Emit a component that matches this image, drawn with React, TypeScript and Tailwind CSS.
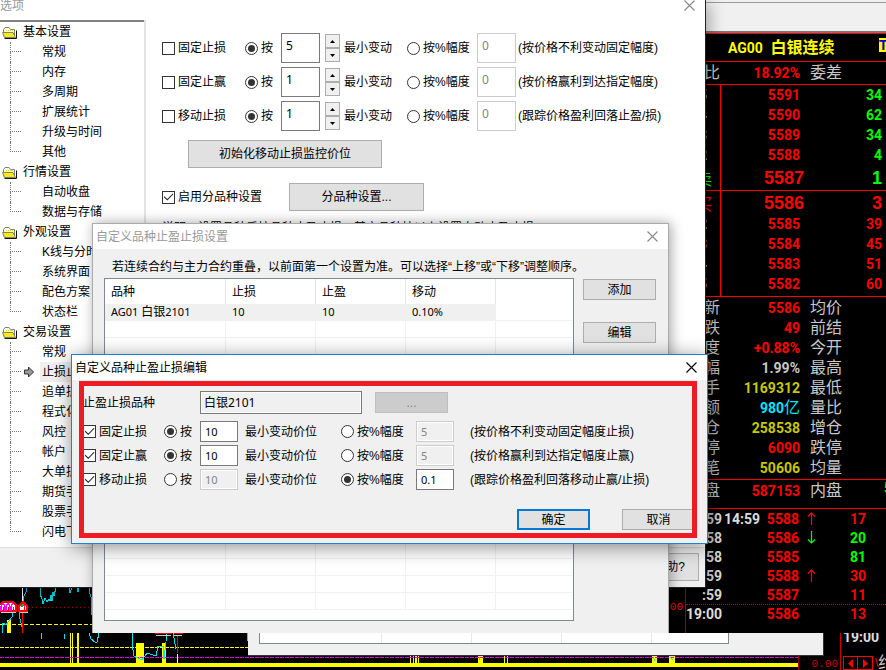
import React from "react";

const CHECKBOX =
  "grid size-[13px] shrink-0 appearance-none place-content-center border border-[#333] bg-white before:hidden before:h-[8px] before:w-[10px] before:bg-[#222] before:content-[''] before:[clip-path:polygon(0_50%,8%_40%,38%_75%,92%_5%,100%_13%,38%_95%)] checked:before:block";
const RADIO =
  "grid size-[13px] shrink-0 appearance-none place-content-center rounded-full border border-[#333] bg-white before:hidden before:size-[7px] before:rounded-full before:bg-[#333] before:content-[''] checked:before:block";
const NUM = "font-['Noto_Sans','Noto_Sans_CJK_SC',sans-serif] text-[11px]";
const BUTTON = "shrink-0 border border-[#adadad] bg-[#e1e1e1] text-center leading-none";

function Check({ label, checked = false }: { label: string; checked?: boolean }) {
  return (
    <label className="flex items-center gap-[3px] whitespace-nowrap">
      <input type="checkbox" defaultChecked={checked} className={CHECKBOX} />
      {label}
    </label>
  );
}

function Radio({ label, name, checked = false }: { label: string; name: string; checked?: boolean }) {
  return (
    <label className="flex items-center gap-[3px] whitespace-nowrap">
      <input type="radio" name={name} defaultChecked={checked} className={RADIO} />
      {label}
    </label>
  );
}

function CloseButton({ className }: { className: string }) {
  return (
    <button type="button" aria-label="关闭" className={className}>
      <svg width="11" height="11" viewBox="0 0 11 11" fill="none" stroke="currentColor" strokeWidth="1.1">
        <path d="M0.5 0.5 10.5 10.5M10.5 0.5 0.5 10.5" />
      </svg>
    </button>
  );
}

/* ---------- settings tree ---------- */

const TREE = [
  { title: "基本设置", items: ["常规", "内存", "多周期", "扩展统计", "升级与时间", "其他"] },
  { title: "行情设置", items: ["自动收盘", "数据与存储"] },
  { title: "外观设置", items: ["K线与分时", "系统界面", "配色方案", "状态栏"] },
  {
    title: "交易设置",
    items: ["常规", "止损止", "追单拆", "程式化", "风控", "帐户", "大单拆", "期货手", "股票手", "闪电下"],
  },
];

function FolderIcon() {
  return (
    <svg width="15" height="13" viewBox="0 0 15 13">
      <path d="M1.5 10V3.5L3 1.5H7L8.5 3.5H12.5V10Z" fill="#fbfbe0" stroke="#808080" />
      <path d="M0.5 6.5H11L13.5 11.5H2.5Z" fill="#fff200" stroke="#808080" />
      <path d="M4 4.5H12M2 8.5H12M3 10.5H13" stroke="#e8dc00" strokeDasharray="1 1" />
      <path d="M2.5 12.5H14.5V4.5" fill="none" stroke="#111" />
    </svg>
  );
}

function Tree() {
  return (
    <nav className="w-[144px] shrink-0 border-t-2 border-[#808080] bg-white">
      {TREE.map((group) => (
        <section key={group.title}>
          <h3 className="flex h-[20px] items-center gap-[6px] pl-[2px]">
            <FolderIcon />
            {group.title}
          </h3>
          <ul>
            {group.items.map((item, i) => (
              <li key={item} className="flex h-[20px] items-center pl-[10px]">
                <span className="flex h-full w-[11px] flex-col">
                  <span className="h-[10px] border-b border-l border-dotted border-[#777]" />
                  {i < group.items.length - 1 && <span className="h-[10px] border-l border-dotted border-[#777]" />}
                </span>
                <span className="flex w-[19px] justify-center pr-[3px]">
                  {item === "止损止" && (
                    <svg width="10" height="12" viewBox="0 0 10 12">
                      <path d="M0.5 4H4.5V1L9.5 6L4.5 11V8H0.5Z" fill="#999" stroke="#333" />
                    </svg>
                  )}
                </span>
                <a
                  href="#settings"
                  className={
                    item === "止损止"
                      ? "flex h-full items-center bg-[#f0f0f0] pl-[2px] pr-4 whitespace-nowrap"
                      : "pl-[2px] whitespace-nowrap"
                  }
                >
                  {item}
                </a>
              </li>
            ))}
          </ul>
        </section>
      ))}
    </nav>
  );
}

/* ---------- options window ---------- */

const OPTION_ROWS = [
  { label: "固定止损", value: "5", note: "(按价格不利变动固定幅度)" },
  { label: "固定止赢", value: "1", note: "(按价格赢利到达指定幅度)" },
  { label: "移动止损", value: "1", note: "(跟踪价格盈利回落止盈/损)" },
];

function Spinner() {
  return (
    <span className="ml-[5px] flex h-[28px] w-[15px] flex-col">
      <button type="button" aria-label="增加" className="grid h-[14px] place-content-center border border-[#adadad] bg-[#f0f0f0]">
        <svg width="5" height="3" viewBox="0 0 5 3">
          <path d="M2.5 0 5 3H0Z" />
        </svg>
      </button>
      <button type="button" aria-label="减少" className="grid h-[14px] place-content-center border border-[#adadad] bg-[#f0f0f0]">
        <svg width="5" height="3" viewBox="0 0 5 3">
          <path d="M0 0H5L2.5 3Z" />
        </svg>
      </button>
    </span>
  );
}

function OptionsWindow() {
  return (
    <section className="absolute top-0 left-0 flex h-[588px] w-[706px] flex-col border-r border-b border-[#222] bg-white shadow-[4px_4px_14px_rgba(0,0,0,0.3)]">
      <header className="flex h-[20px] shrink-0 items-start justify-between pr-[10px] text-[#999]">
        <h2 className="-mt-[3px] leading-[18px]">选项</h2>
        <CloseButton className="text-[#888]" />
      </header>
      <div className="flex h-[527px] shrink-0">
        <Tree />
        <div className="flex grow flex-col border-l-2 border-[#e4e4e4] pt-[13px] pl-[16px]">
          <div className="flex flex-col gap-[4px]">
            {OPTION_ROWS.map((row) => (
              <div
                key={row.label}
                className="grid h-[30px] grid-cols-[83px_36px_63px_63px_70px_41px_auto] items-center whitespace-nowrap"
              >
                <Check label={row.label} />
                <Radio label="按" name={"opt-" + row.label} checked />
                <span className="flex items-center">
                  <input
                    aria-label={row.label + "最小变动"}
                    defaultValue={row.value}
                    className="h-[30px] w-[39px] border border-[#7a7a7a] bg-white pb-[6px] pl-[4px] font-['Noto_Sans',sans-serif] text-[12px]"
                  />
                  <Spinner />
                </span>
                <span>最小变动</span>
                <Radio label="按%幅度" name={"opt-" + row.label} />
                <input
                  aria-label={row.label + "幅度"}
                  defaultValue="0"
                  disabled
                  className="h-[30px] w-[39px] border border-[#ccc] bg-white pb-[6px] pl-[4px] font-['Noto_Sans',sans-serif] text-[12px] text-[#838383]"
                />
                <span>{row.note}</span>
              </div>
            ))}
          </div>
          <button type="button" className={BUTTON + " mt-[9px] ml-[26px] h-[28px] w-[194px]"}>
            初始化移动止损监控价位
          </button>
          <div className="mt-[15px] flex h-[28px] shrink-0 items-center">
            <div className="w-[127px]">
              <Check label="启用分品种设置" checked />
            </div>
            <button type="button" className={BUTTON + " h-[28px] w-[135px]"}>
              分品种设置...
            </button>
          </div>
          <p className="mt-[10px] leading-[14px]">说明：设置品种后按品种止盈止损，其它品种按以上设置自动止盈止损</p>
        </div>
      </div>
      <footer className="flex grow items-center justify-end border-t border-[#dcdcdc] bg-[#f0f0f0] pr-[6px] pb-[2px]">
        <button type="button" className={BUTTON + " h-[28px] w-[59px]"}>
          帮助?
        </button>
      </footer>
    </section>
  );
}

/* ---------- list dialog ---------- */

const EMPTY_ROWS = Array.from({ length: 17 }, (_, i) => i);

function ListDialog() {
  return (
    <section className="absolute top-[223px] left-[92px] flex h-[410px] w-[577px] flex-col border border-b-0 border-[#aaa] bg-[#f0f0f0] shadow-[2px_0_12px_rgba(0,0,0,0.35)]">
      <header className="flex h-[25px] shrink-0 items-center justify-between bg-white pr-[10px] pl-[3px] text-[#999]">
        <h2>自定义品种止盈止损设置</h2>
        <CloseButton className="text-[#888]" />
      </header>
      <p className="flex h-[29px] shrink-0 items-center pt-[7px] pl-[19px] whitespace-nowrap">
        若连续合约与主力合约重叠，以前面第一个设置为准。可以选择“上移”或“下移”调整顺序。
      </p>
      <div className="flex gap-[9px] pl-[11px]">
        <div className="h-[343px] w-[470px] shrink-0 overflow-hidden border border-[#828790] bg-white pr-px">
          <table className="w-full table-fixed border-separate border-spacing-0 text-left">
            <colgroup>
              <col className="w-[121px]" />
              <col className="w-[90px]" />
              <col className="w-[90px]" />
              <col className="w-[90px]" />
              <col />
            </colgroup>
            <thead>
              <tr className="h-[25px]">
                {["品种", "止损", "止盈", "移动"].map((h) => (
                  <th key={h} className="border-r border-[#e5e5e5] p-0 pl-[6px] font-normal">
                    {h}
                  </th>
                ))}
                <th className="p-0" />
              </tr>
            </thead>
            <tbody>
              <tr className={"h-[17px] leading-[16px] " + NUM}>
                <td className="border-b border-[#f0f0f0] bg-[#f0f0f0] p-0 pl-[6px]">
                  AG01 <span className="text-[12px]">白银</span>2101
                </td>
                <td className="border-b border-[#f0f0f0] bg-[#f0f0f0] p-0 pl-[6px]">10</td>
                <td className="border-b border-[#f0f0f0] bg-[#f0f0f0] p-0 pl-[6px]">10</td>
                <td className="border-b border-[#f0f0f0] bg-[#f0f0f0] p-0 pl-[6px]">0.10%</td>
                <td className="border-b border-[#f0f0f0] p-0" />
              </tr>
              {EMPTY_ROWS.map((r) => (
                <tr key={r} className="h-[17px]">
                  <td className="border-r border-b border-[#f0f0f0] p-0" />
                  <td className="border-r border-b border-[#f0f0f0] p-0" />
                  <td className="border-r border-b border-[#f0f0f0] p-0" />
                  <td className="border-r border-b border-[#f0f0f0] p-0" />
                  <td className="border-b border-[#f0f0f0] p-0" />
                </tr>
              ))}
            </tbody>
          </table>
        </div>
        <div className="flex flex-col gap-[22px] pt-px">
          <button type="button" className={BUTTON + " h-[21px] w-[73px]"}>
            添加
          </button>
          <button type="button" className={BUTTON + " h-[21px] w-[73px]"}>
            编辑
          </button>
        </div>
      </div>
    </section>
  );
}

/* ---------- edit dialog ---------- */

const EDIT_ROWS = [
  { label: "固定止损", ticks: "10", percent: "5", byTicks: true, note: "(按价格不利变动固定幅度止损)" },
  { label: "固定止赢", ticks: "10", percent: "5", byTicks: true, note: "(按价格赢利到达指定幅度止赢)" },
  { label: "移动止损", ticks: "10", percent: "0.1", byTicks: false, note: "(跟踪价格盈利回落移动止赢/止损)" },
];
const FIELD_ON = "h-[21px] w-[38px] border border-[#7a7a7a] bg-white pl-[4px] " + NUM;
const FIELD_OFF =
  "h-[21px] w-[38px] border border-[#ccc] bg-[#f0f0f0] pl-[4px] text-[#838383] shadow-[inset_0_0_0_1px_#fff] " + NUM;

function EditDialog() {
  return (
    <section className="absolute top-[354px] left-[71px] flex h-[190px] w-[637px] flex-col border border-[#1883d7] bg-[#f0f0f0] shadow-[0_3px_18px_rgba(0,0,0,0.45)]">
      <header className="flex h-[25px] shrink-0 items-center justify-between bg-white pr-[10px] pl-[3px]">
        <h2>自定义品种止盈止损编辑</h2>
        <CloseButton className="text-black" />
      </header>
      <div className="relative flex grow flex-col pt-[11px] pl-[11px] whitespace-nowrap">
        <div className="flex h-[23px] items-center">
          <label htmlFor="contract" className="w-[117px]">
            止盈止损品种
          </label>
          <input
            id="contract"
            readOnly
            value="白银2101"
            className="h-[23px] w-[162px] border border-[#7a7a7a] bg-[#f0f0f0] pb-[2px] pl-[3px] font-['Noto_Sans','Noto_Sans_CJK_SC',sans-serif] text-[12px] shadow-[inset_0_0_0_1px_#fff]"
          />
          <button type="button" disabled className="ml-[13px] h-[21px] w-[73px] border border-[#bfbfbf] bg-[#ccc] leading-none text-[#838383]">
            ...
          </button>
        </div>
        <div className="mt-[7px] flex flex-col gap-[3px]">
          {EDIT_ROWS.map((row) => (
            <div key={row.label} className="grid h-[21px] grid-cols-[81px_36px_45px_96px_75px_54px_auto] items-center">
              <Check label={row.label} checked />
              <Radio label="按" name={"edit-" + row.label} checked={row.byTicks} />
              <input
                aria-label={row.label + "最小变动价位"}
                defaultValue={row.ticks}
                disabled={!row.byTicks}
                className={row.byTicks ? FIELD_ON : FIELD_OFF}
              />
              <span>最小变动价位</span>
              <Radio label="按%幅度" name={"edit-" + row.label} checked={!row.byTicks} />
              <input
                aria-label={row.label + "幅度"}
                defaultValue={row.percent}
                disabled={row.byTicks}
                className={row.byTicks ? FIELD_OFF : FIELD_ON}
              />
              <span>{row.note}</span>
            </div>
          ))}
        </div>
        <div className="mt-[19px] flex justify-end gap-[32px] pr-[12px]">
          <button type="button" className="h-[21px] w-[73px] border-2 border-[#0078d7] bg-[#e1e1e1] leading-none">
            确定
          </button>
          <button type="button" className={BUTTON + " h-[21px] w-[73px]"}>
            取消
          </button>
        </div>
        <div className="pointer-events-none absolute top-[1px] right-[10px] bottom-[5px] left-[7px] border-5 border-[#ed1c24]" />
      </div>
    </section>
  );
}

/* ---------- quote panel ---------- */

const ASKS = [
  ["5", "5591", "34"],
  ["4", "5590", "62"],
  ["3", "5589", "34"],
  ["2", "5588", "4"],
];
const BIDS = [
  ["2", "5585", "39"],
  ["3", "5584", "45"],
  ["4", "5583", "51"],
  ["5", "5582", "60"],
];
const STATS = [
  ["新", "5586", "均价", "text-[#f00]"],
  ["跌", "49", "前结", "text-[#f00]"],
  ["度", "+0.88%", "今开", "text-[#f00]"],
  ["幅", "1.99%", "最高", "text-[#c8c8c8]"],
  ["手", "1169312", "最低", "text-[#c8c800]"],
  ["额", "980", "量比", "text-[#00e5ff]", "亿"],
  ["仓", "258538", "增仓", "text-[#c8c800]"],
  ["停", "6090", "跌停", "text-[#f00]"],
  ["笔", "50606", "均量", "text-[#c8c800]"],
];
const TRADES = [
  ["59", "14:59", "5588", "up", "17", "text-[#f00]"],
  ["58", "", "5586", "down", "20", "text-[#0f0]"],
  ["58", "", "5585", "", "81", "text-[#0f0]"],
  ["59", "", "5588", "up", "30", "text-[#f00]"],
  [":59", "", "5587", "", "11", "text-[#f00]"],
  ["19:00", "", "5586", "", "13", "text-[#f00]"],
];
const DIGITS = "font-['Roboto','Noto_Sans_CJK_SC',sans-serif] text-[14px] font-bold";
const HAN = "text-[16px] text-[#c8c8c8]";

function BookRow({ row, color }: { row: string[]; color: string }) {
  return (
    <div className={"flex h-[20px] items-center " + DIGITS}>
      <span className="w-[21px] text-right text-[#c8c8c8]">{row[0]}</span>
      <span className="w-[93px] text-right text-[#f00]">{row[1]}</span>
      <span className={"ml-auto pr-[4px] " + color}>{row[2]}</span>
    </div>
  );
}

function BestRow({ side, price, volume, color, size }: { side: string; price: string; volume: string; color: string; size: string }) {
  return (
    <div className={"flex items-center font-['Liberation_Sans',sans-serif] text-[18px] font-bold " + size}>
      <span className={"w-[26px] text-right font-['Noto_Sans_CJK_SC',sans-serif] text-[16px] font-normal " + color}>{side}</span>
      <span className="w-[92px] text-right text-[#f00]">{price}</span>
      <span className={"ml-auto pr-[4px] " + color}>{volume}</span>
    </div>
  );
}

function StatRow({ row }: { row: string[] }) {
  return (
    <div className="flex h-[21px] items-center whitespace-nowrap">
      <span className={"w-[34px] text-right " + HAN}>{row[0]}</span>
      <span className={"w-[80px] text-right " + DIGITS + " " + row[3]}>
        {row[1]}
        {row[4] && <span className="text-[16px] font-normal">{row[4]}</span>}
      </span>
      <span className={"ml-[10px] " + HAN}>{row[2]}</span>
    </div>
  );
}

function QuotePanel() {
  return (
    <aside className="w-[201px] shrink-0 overflow-hidden border-l border-[#a00000] bg-black">
      <div className="h-[33px] border-b-2 border-[#777] bg-[#f0f0f0] pt-[2px]">
        <div className="border-t border-[#999]" />
      </div>
      <h2 className="flex h-[28px] items-center justify-between border-t border-[#f00] pl-[42px] font-bold whitespace-nowrap text-[#ff0]">
        <span className={DIGITS}>
          AG00 <span className="ml-[4px] text-[16px]">白银连续</span>
        </span>
        <span className="mb-[5px] w-[7px] overflow-hidden bg-[#ff0] text-[14px] leading-[14px] text-[#00c]">T</span>
      </h2>
      <div className="h-[23px] border-t border-[#f00]">
        <StatRow row={["比", "18.92%", "委差", "text-[#f00]"]} />
      </div>
      <div className="border-t border-[#f00] bg-[linear-gradient(#f00,#f00)] bg-[length:1px_100%] bg-[position:34px_0] bg-no-repeat">
        {ASKS.map((r) => (
          <BookRow key={r[1]} row={r} color="text-[#0f0]" />
        ))}
        <BestRow side="卖" price="5587" volume="1" color="text-[#0f0]" size="h-[25px]" />
        <div className="border-t border-[#f00] pb-[2px]">
          <BestRow side="买" price="5586" volume="3" color="text-[#f00]" size="h-[23px]" />
          {BIDS.map((r) => (
            <BookRow key={r[1]} row={r} color="text-[#f00]" />
          ))}
        </div>
      </div>
      <div className="flex h-[183px] flex-col border-t border-[#f00]">
        {STATS.map((r) => (
          <div key={r[0]} className="h-[20px]">
            <StatRow row={r} />
          </div>
        ))}
      </div>
      <div className="flex h-[29px] border-t border-[#f00]">
        <StatRow row={["盘", "587153", "内盘", "text-[#f00]"]} />
        <span className={"ml-auto w-[2px] overflow-hidden text-[#0f0] " + DIGITS}>5</span>
      </div>
      <div className="border-t border-[#f00]">
        {TRADES.map(([time, extra, price, dir, volume, color]) => (
          <div
            key={time + price}
            className={
              "flex h-[19px] items-center " + DIGITS + (time === "19:00" ? " border-t border-dotted border-[#c00]" : "")
            }
          >
            <span className="w-[36px] text-right text-[#dcdcdc]">{time}</span>
            <span className="w-[37px] pl-[2px] text-[#dcdcdc]">{extra}</span>
            <span className="w-[40px] text-right text-[#f00]">{price}</span>
            <span className="flex w-[24px] justify-center">
              {dir !== "" && (
                <svg width="9" height="13" viewBox="0 0 9 13" fill="none" strokeWidth="1.2" stroke={dir === "up" ? "#f00" : "#0f0"}>
                  <path d={dir === "up" ? "M4.5 13V1M1 4.5 4.5 1 8 4.5" : "M4.5 0V12M1 8.5 4.5 12 8 8.5"} />
                </svg>
              )}
            </span>
            <span className={"w-[43px] text-right " + color}>{volume}</span>
          </div>
        ))}
      </div>
    </aside>
  );
}

/* ---------- chart pieces ---------- */

function UpperChart() {
  return (
    <svg width="100" height="46" viewBox="0 0 100 46" fill="none" shapeRendering="crispEdges">
      <path d="M28 20.5H100" stroke="#900" strokeDasharray="1 3" />
      <path d="M0 37.5H100" stroke="#ff0" strokeDasharray="4 2" />
      <path d="M7 33h4v13h-4z" fill="#ff0" />
      <path
        d="M2 46 3 36 6 38 8 35 12 30 13 26M19 24 20 32 22 40M23 16 24 9 26 5 27 0M40 0V7L42 12 43 17 45 11 47 15 49 12 50 14 51 8 52 14 53 5 54 9 56 0M69 0 70 6 72 0M77 0 78 5 79 0M89 0V4L91 10 92 28"
        stroke="#00d5e5"
      />
      <path d="M22.5 0V16" stroke="#fff" />
      <path d="M22.5 26V46" stroke="#f00" />
      <path d="M-1 24V18L3 15H13L16 18V24ZM19 24V19L23 15 27 19V24Z" fill="#fff" stroke="#f00" strokeWidth="1.5" />
      <path d="M1 24V19L3 16 5 19V24M6 24V19L8 16 10 19V24M11 24V19L13 16M21 20 23 17 25 20" stroke="#f0f" strokeWidth="1.3" />
      <path d="M3.5 20V24M8.5 20V24M13.5 20V24M24.5 20V24" stroke="#f00" />
      <path d="M22.5 17V20" stroke="#0c0" />
      <path d="M1 25.5H16M20 25.5H28" stroke="#ccc" />
    </svg>
  );
}

function LowerChart() {
  return (
    <svg width="798" height="37" viewBox="0 0 798 37" fill="none" shapeRendering="crispEdges" className="shrink-0">
      <path
        d="M70 0h1v30h-1zM72 0h1v30h-1zM77 0h2v30h-2zM136 10h8v20h-8zM162 10h4v20h-4zM410 23h1v7h-1zM413 23h1v7h-1zM415 23h2v7h-2zM418 23h1v7h-1zM478 23h5v7h-5zM504 23h1v7h-1zM507 23h1v7h-1zM652 23h5v7h-5zM669 23h6v7h-6z"
        fill="#ff0"
      />
      <path d="M0 14.5H248" stroke="#ff0" strokeDasharray="4 1" />
      <path d="M0 24.5H798" stroke="#e000e0" strokeDasharray="4 1" />
      <path d="M0 30h798v4H0z" fill="#ff0" />
      <path
        d="M41 0V6M64 6 65 1M89 0 91 6 95 9H97L99 0M132 0V10L134 23 138 25 142 27 147 20 156 23 158 13 163 13 164 26 167 0M173 0 176 16M247 0V8M479 24 480 27M653 24 655 28M670 24 673 27"
        stroke="#00e5f5"
      />
      <path d="M155 0H172V1H155ZM174 0H183V1H174Z" fill="#f00" />
      <path d="M156 2.5H171M174 2.5H182" stroke="#ccc" />
      <path d="M177.5 3V20" stroke="#f00" />
      <path d="M177.5 21V30" stroke="#fff" />
    </svg>
  );
}

function LowerStrip() {
  return (
    <div className="relative flex h-[37px] overflow-hidden bg-black">
      <LowerChart />
      <div className="flex w-[42px] shrink-0 items-end justify-end border-l border-[#a00000] pr-[2px] font-['Liberation_Mono',monospace] text-[11px] leading-[11px] text-[#c00]">
        0.00
      </div>
      <div className="flex grow flex-col justify-between overflow-hidden border-l border-[#c00] pl-[2px]">
        <span className={"h-[12px] leading-[8px] text-[#dcdcdc] " + DIGITS}>19:00</span>
        <div className="flex h-[14px] items-center text-[#f00]">
          <button type="button" aria-label="上一页" className="grid h-[14px] w-[15px] shrink-0 place-content-center border border-[#f00]">
            <svg width="5" height="9" viewBox="0 0 5 9" fill="currentColor">
              <path d="M5 0V9L0 4.5Z" />
            </svg>
          </button>
          <button type="button" aria-label="下一页" className="grid h-[14px] w-[15px] shrink-0 place-content-center border border-l-0 border-[#f00]">
            <svg width="5" height="9" viewBox="0 0 5 9" fill="currentColor">
              <path d="M0 0V9L5 4.5Z" />
            </svg>
          </button>
          <span className="pl-[2px] text-[12px]">\</span>
          <span className="text-[16px] text-[#c8c8c8]">约</span>
        </div>
      </div>
      <div className="absolute top-0 left-[248px] h-[23px] w-[576px] border-r border-b border-[#333] bg-[#f0f0f0] pl-[11px]">
        <div className="flex h-[11px] w-[470px] border-x border-b border-[#828790] bg-white">
          <span className="w-[122px] border-r border-[#e8e8e8]" />
          <span className="w-[90px] border-r border-[#e8e8e8]" />
          <span className="w-[90px] border-r border-[#e8e8e8]" />
          <span className="w-[90px] border-r border-[#e8e8e8]" />
        </div>
      </div>
    </div>
  );
}

export default function App() {
  return (
    <div className="min-h-screen overflow-hidden bg-black font-['Liberation_Sans','Noto_Sans_CJK_SC',sans-serif] text-[12px] leading-[16px] text-black">
      <main className="relative flex h-[633px] overflow-hidden">
        <div className="flex grow items-end justify-between">
          <UpperChart />
          <span className="pr-[2px] pb-[18px] font-['Liberation_Mono',monospace] text-[11px] text-[#f00]">00</span>
        </div>
        <QuotePanel />
        <OptionsWindow />
        <ListDialog />
        <EditDialog />
      </main>
      <LowerStrip />
    </div>
  );
}
